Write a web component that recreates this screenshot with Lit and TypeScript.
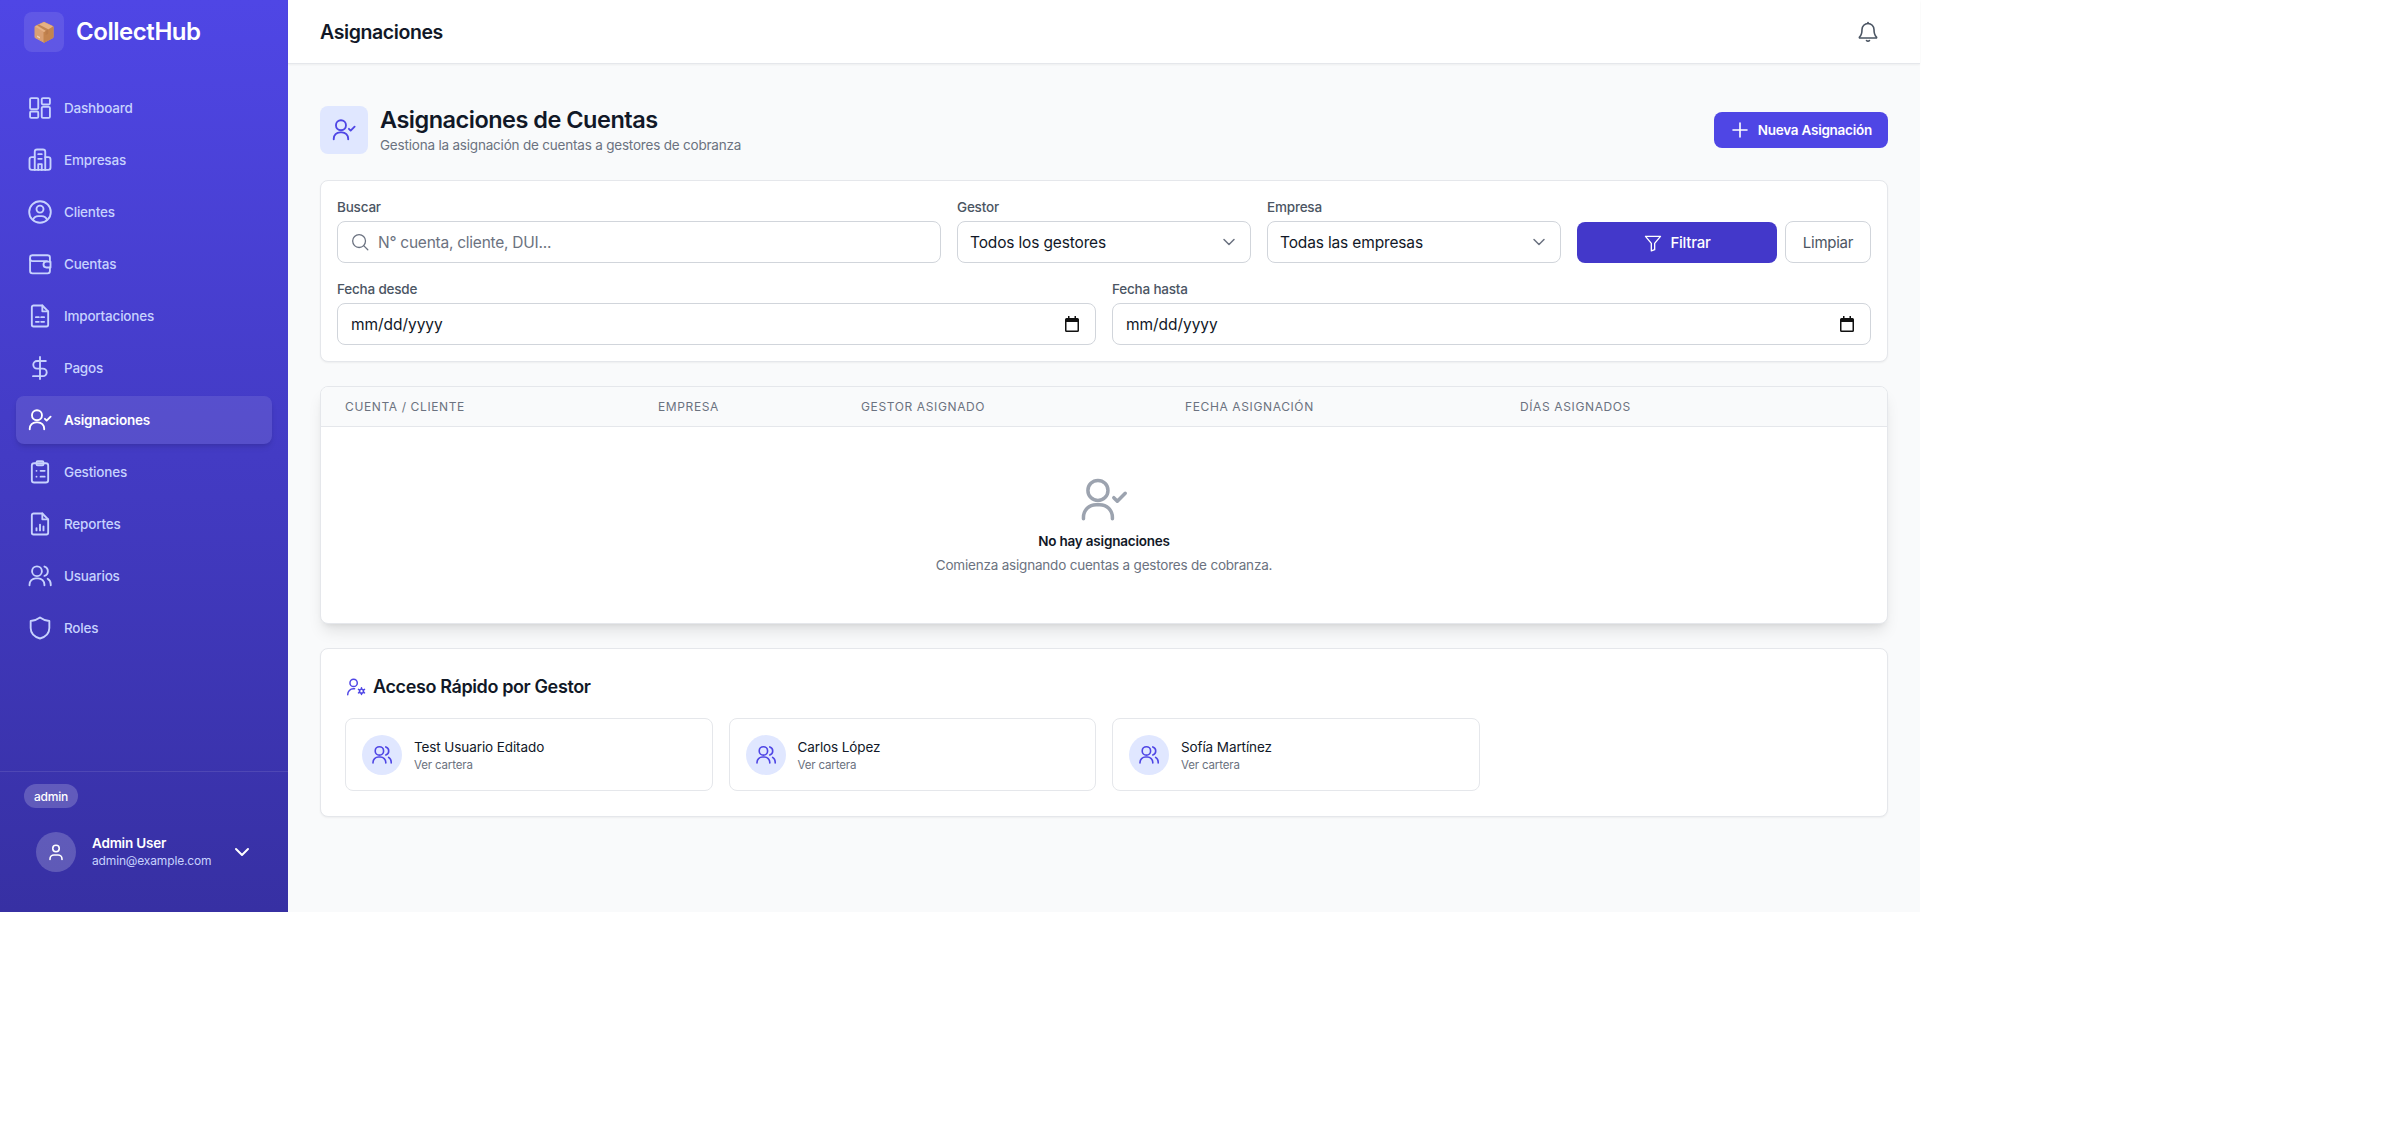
import { LitElement, html, css, svg } from "lit";
import { customElement } from "lit/decorators.js";

const ic = (paths: unknown, sw = 1.6) => html`<svg viewBox="0 0 24 24" fill="none" stroke="currentColor" stroke-width=${sw} stroke-linecap="round" stroke-linejoin="round">${paths}</svg>`;

const userCheck = svg`<circle cx="9.4" cy="7.9" r="4.3"/><path d="M3.2 20v-.6a5.400 5.400 0 0 1 5.400-5.400h1.600a5.400 5.400 0 0 1 5.400 5.400v.6"/><path d="m16.200 11 1.500 1.500 3.400-3.400"/>`;
const users = svg`<circle cx="9.400" cy="7.900" r="4.200"/><path d="M3 20v-.6a5.400 5.400 0 0 1 5.400-5.400h2a5.400 5.400 0 0 1 5.400 5.400v.6"/><path d="M15.800 3.900a4.200 4.200 0 0 1 0 8"/><path d="M18.600 14.400a5.400 5.400 0 0 1 2.600 4.600v1"/>`;

const navItems: [string, unknown][] = [
  ["Dashboard", svg`<rect x="3.500" y="3.500" width="7" height="9.500" rx="1"/><rect x="13.500" y="3.500" width="7" height="5.500" rx="1"/><rect x="13.500" y="11" width="7" height="9.500" rx="1"/><rect x="3.500" y="15" width="7" height="5.500" rx="1"/>`],
  ["Empresas", svg`<path d="M7.500 20.500V5a2 2 0 0 1 2-2h5a2 2 0 0 1 2 2v15.500"/><path d="M7.500 9.500H5a2 2 0 0 0-2 2v7a2 2 0 0 0 2 2h14a2 2 0 0 0 2-2v-7a2 2 0 0 0-2-2h-2.500"/><path d="M10.500 7h3M10.500 11h3M10.500 20.500V15.500h3v5"/>`],
  ["Clientes", svg`<circle cx="12" cy="12" r="9.250"/><circle cx="12" cy="9.500" r="3"/><path d="M6 18.500c.9-2 2.600-3 4.500-3h3c1.900 0 3.600 1 4.500 3"/>`],
  ["Cuentas", svg`<path d="M20.500 10V6.500a2 2 0 0 0-2-2H5.500a2 2 0 0 0-2 2V18a2 2 0 0 0 2 2h13a2 2 0 0 0 2-2v-3"/><path d="M3.500 7.500a2 2 0 0 0 2 2H18"/><path d="M21 10h-3.500a2.500 2.500 0 0 0 0 5H21z"/>`],
  ["Importaciones", svg`<path d="M14 3H6.500A1.500 1.500 0 0 0 5 4.500v15A1.500 1.500 0 0 0 6.500 21h11a1.500 1.500 0 0 0 1.500-1.500V8z"/><path d="M14 3v5h5"/><path d="M8.500 13h2.500M13 13h2.500M8.500 17h2.500M13 17h2.500"/>`],
  ["Pagos", svg`<path d="M12 2.500v19"/><path d="M17 6H9.500a3.250 3.250 0 0 0 0 6.500h5a3.250 3.250 0 0 1 0 6.500H6"/>`],
  ["Asignaciones", userCheck],
  ["Gestiones", svg`<rect x="5" y="4.500" width="14" height="16.500" rx="2"/><rect x="9" y="2.750" width="6" height="3.500" rx="1"/><path d="M9 11h.01M12.500 11H16M9 16h.01M12.500 16H16"/>`],
  ["Reportes", svg`<path d="M14 3H6.500A1.500 1.500 0 0 0 5 4.500v15A1.500 1.500 0 0 0 6.500 21h11a1.500 1.500 0 0 0 1.500-1.500V8z"/><path d="M14 3v5h5"/><path d="M9 17.500v-2M12 17.500v-5M15 17.500v-3.500"/>`],
  ["Usuarios", users],
  ["Roles", svg`<path d="M12 3c2.500 1.900 5 2.800 8 3v6c0 4.500-3.200 7.600-8 9-4.800-1.400-8-4.500-8-9V6c3-.2 5.500-1.100 8-3z"/>`],
];

const chevron = svg`<path d="m6 9 6 6 6-6"/>`;

@customElement("app-root")
export class AppRoot extends LitElement {
  static styles = css`
    :host { display: block; width: 1920px; height: 912px; font-family: Inter, "Liberation Sans", sans-serif; color: #111827; background: #fff; }
    * { box-sizing: border-box; }
    svg { display: block; flex: none; }
    .app { display: flex; height: 912px; }
    .side { width: 288px; flex: none; display: flex; flex-direction: column; background: linear-gradient(180deg, #4f46e5, #3730a3); color: #fff; }
    .brand { height: 64px; padding: 0 24px; display: flex; align-items: center; gap: 12px; }
    .logo { width: 40px; height: 40px; border-radius: 8px; background: rgba(255,255,255,.1); display: flex; align-items: center; justify-content: center; }
    .logo svg { width: 24px; height: 24px; }
    .brand b { font-size: 24px; font-weight: 600; letter-spacing: -.45px; margin-top: -1px; }
    nav { flex: 1; padding: 20px 16px 0; display: flex; flex-direction: column; gap: 4px; }
    .item { height: 48px; border-radius: 8px; padding: 0 10px; display: flex; align-items: center; gap: 10px; font-size: 13.500px; font-weight: 500; color: #c7d2fe; letter-spacing: -.2px; }
    .item svg { width: 28px; height: 28px; }
    .item span { margin-top: -1px; }
    .item.on { background: rgba(255,255,255,.1); color: #fff; font-weight: 600; box-shadow: 0 4px 6px -1px rgba(0,0,0,.1), 0 2px 4px -2px rgba(0,0,0,.1); }
    .foot { border-top: 1px solid rgba(255,255,255,.1); height: 141px; padding: 12px 24px 0; flex: none; }
    .badge { display: inline-flex; align-items: center; height: 24px; padding: 0 10px; border-radius: 12px; background: rgba(255,255,255,.2); font-size: 12px; font-weight: 500; letter-spacing: -.2px; }
    .user { margin-top: 24px; padding-left: 12px; display: flex; align-items: center; gap: 16px; }
    .ava { width: 40px; height: 40px; border-radius: 50%; background: rgba(255,255,255,.2); display: flex; align-items: center; justify-content: center; }
    .ava svg { width: 24px; height: 24px; }
    .who { width: 122px; margin-top: -2px; }
    .who b { display: block; font-size: 13.500px; font-weight: 600; line-height: 20px; letter-spacing: -.2px; }
    .who span { display: block; font-size: 12px; line-height: 16px; color: #c7d2fe; letter-spacing: -.15px; }
    .chev { width: 24px; height: 24px; }
    .main { flex: 1; min-width: 0; background: #f9fafb; display: flex; flex-direction: column; }
    .top { height: 64px; flex: none; background: #fff; border-bottom: 1px solid #e5e7eb; box-shadow: 0 1px 2px rgba(0,0,0,.05); padding: 0 40px 0 32px; display: flex; align-items: center; justify-content: space-between; }
    .top h1 { margin: 0; font-size: 19.500px; font-weight: 600; letter-spacing: -.4px; }
    .top svg { width: 24px; height: 24px; color: #4b5563; }
    .content { padding: 41px 32px 0; display: flex; flex-direction: column; }
    .head { display: flex; align-items: center; justify-content: space-between; height: 50px; }
    .hl { display: flex; align-items: center; gap: 12px; }
    .hicon { width: 48px; height: 48px; border-radius: 8px; background: #e0e7ff; color: #4f46e5; display: flex; align-items: center; justify-content: center; }
    .hicon svg { width: 28px; height: 28px; }
    h2 { margin: 0; font-size: 23.500px; line-height: 30px; font-weight: 600; letter-spacing: -.5px; }
    .hl p { margin: 0; font-size: 13.500px; line-height: 20px; color: #6b7280; letter-spacing: -.2px; }
    .new { height: 36px; padding: 0 16px 0 14px; border: 0; border-radius: 8px; background: #4f46e5; color: #fff; display: flex; align-items: center; gap: 6px; font: 600 13.500px Inter, sans-serif; letter-spacing: -.25px; }
    .new svg { width: 24px; height: 24px; }
    .card { background: #fff; border: 1px solid #e5e7eb; border-radius: 8px; box-shadow: 0 1px 2px rgba(0,0,0,.05); }
    .filters { margin-top: 25px; height: 182px; padding: 16px; display: flex; flex-direction: column; gap: 16px; }
    .r1 { display: grid; grid-template-columns: 604fr 294fr 294fr 294fr; gap: 16px; align-items: end; }
    .r2 { display: grid; grid-template-columns: 1fr 1fr; gap: 16px; }
    label { display: block; font-size: 13.500px; line-height: 20px; color: #4b5563; margin-bottom: 4px; letter-spacing: -.2px; font-weight: 500; }
    .box { height: 42px; border: 1px solid #d1d5db; border-radius: 8px; background: #fff; padding: 0 12px; display: flex; align-items: center; font-size: 15.500px; color: #111827; letter-spacing: -.15px; }
    .box.sel { justify-content: space-between; padding-right: 11px; }
    .box.sel svg { width: 20px; height: 20px; color: #6b7280; }
    .ph { color: #6b7280; margin-left: 7px; letter-spacing: -.25px; }
    .box.search svg { width: 22px; height: 22px; color: #6b7280; margin-left: -1px; }
    .cal { width: 16px; height: 16px; color: #111; }
    .box.date { justify-content: space-between; padding: 0 15px 0 13px; letter-spacing: -.05px; }
    .actions { display: flex; gap: 8px; align-items: flex-end; }
    .filt { flex: 1; height: 41px; border: 0; border-radius: 8px; background: #4338ca; color: #fff; display: flex; align-items: center; justify-content: center; gap: 7px; font: 500 15px Inter, sans-serif; letter-spacing: -.25px; }
    .filt svg { width: 20px; height: 20px; }
    .clr { width: 86px; height: 42px; border: 1px solid #d1d5db; border-radius: 8px; background: #fff; color: #4b5563; font: 400 15px Inter, sans-serif; letter-spacing: -.25px; }
    .table { margin-top: 24px; height: 238px; box-shadow: 0 10px 15px -3px rgba(0,0,0,.1), 0 4px 6px -4px rgba(0,0,0,.1); overflow: hidden; }
    .thead { height: 40px; background: #f9fafb; border-bottom: 1px solid #e5e7eb; display: grid; grid-template-columns: 313px 203px 324px 335px 1fr; align-items: center; font-size: 12px; font-weight: 400; letter-spacing: .62px; color: #6b7280; text-transform: uppercase; }
    .thead span { padding-left: 24px; }
    .empty { display: flex; flex-direction: column; align-items: center; padding-top: 45px; }
    .empty svg { width: 56px; height: 56px; color: #9ca3af; }
    .empty b { margin-top: 3px; font-size: 13.500px; line-height: 20px; font-weight: 600; letter-spacing: -.2px; }
    .empty p { margin: 4px 0 0; font-size: 13.500px; line-height: 20px; color: #6b7280; letter-spacing: -.2px; }
    .quick { margin-top: 24px; height: 169px; padding: 24px 24px 0; }
    .qh { display: flex; align-items: center; gap: 6px; height: 28px; }
    .qh svg { width: 22px; height: 22px; color: #4f46e5; }
    h3 { margin: 0; font-size: 18px; font-weight: 600; letter-spacing: -.38px; margin-top: -1px; }
    .grid { margin-top: 17px; display: grid; grid-template-columns: repeat(4, 1fr); gap: 16px; }
    .person { height: 73px; border: 1px solid #e5e7eb; border-radius: 8px; padding: 0 16px; display: flex; align-items: center; gap: 12px; }
    .pa { width: 40px; height: 40px; border-radius: 50%; background: #e0e7ff; color: #4f46e5; display: flex; align-items: center; justify-content: center; }
    .pa svg { width: 24px; height: 24px; }
    .person b { display: block; font-size: 13.500px; line-height: 20px; font-weight: 400; letter-spacing: -.1px; }
    .person span { display: block; font-size: 11.500px; line-height: 16px; color: #6b7280; letter-spacing: -.15px; }
  `;

  render() {
    return html`<div class="app">
      <aside class="side">
        <div class="brand">
          <div class="logo"><svg viewBox="0 0 24 24">
            <path d="M12 2.200 21 6.500v11l-9 4.800-9-4.800v-11z" fill="#d9a074" stroke="#d9a074" stroke-linejoin="round"/>
            <path d="M12 12l9-5.500v11l-9 4.800z" fill="#c4844f" stroke="#c4844f" stroke-linejoin="round"/>
            <path d="M12 2.200 21 6.500 12 12 3 6.500z" fill="#e6b184"/>
            <path d="m7 4.400 9.200 4.900v4.400l-2.600 1.300v-4.200L5.200 5.500z" fill="#b97a48" opacity=".8"/>
            <path d="m5 15.500 3 1.600v1.500l-3-1.600z" fill="#f3dcc4" opacity=".8"/>
          </svg></div>
          <b>CollectHub</b>
        </div>
        <nav>
          ${navItems.map(([label, icon]) => html`<div class="item ${label === "Asignaciones" ? "on" : ""}">${ic(icon)}<span>${label}</span></div>`)}
        </nav>
        <div class="foot">
          <span class="badge">admin</span>
          <div class="user">
            <div class="ava">${ic(svg`<circle cx="12" cy="8.500" r="3.250"/><path d="M6 19.500v-.5a4 4 0 0 1 4-4h4a4 4 0 0 1 4 4v.5"/>`)}</div>
            <div class="who"><b>Admin User</b><span>admin@example.com</span></div>
            <div class="chev">${ic(chevron, 2)}</div>
          </div>
        </div>
      </aside>
      <div class="main">
        <header class="top">
          <h1>Asignaciones</h1>
          ${ic(svg`<path d="M18 9.500a6 6 0 0 0-12 0c0 3.500-.7 6-2.500 7.500a.6.600 0 0 0 .4 1h16.200a.6.600 0 0 0 .4-1C18.700 15.500 18 13 18 9.500z"/><path d="M10.500 20.500a2 2 0 0 0 3 0"/><path d="M12 3.500V2.500"/>`)}
        </header>
        <div class="content">
          <div class="head">
            <div class="hl">
              <div class="hicon">${ic(userCheck)}</div>
              <div><h2>Asignaciones de Cuentas</h2><p>Gestiona la asignación de cuentas a gestores de cobranza</p></div>
            </div>
            <button class="new">${ic(svg`<path d="M12 5v14M5 12h14"/>`)}Nueva Asignación</button>
          </div>
          <section class="card filters">
            <div class="r1">
              <div><label>Buscar</label><div class="box search">${ic(svg`<circle cx="11" cy="11" r="7"/><path d="m20.500 20.500-4.500-4.500"/>`, 1.4)}<span class="ph">N° cuenta, cliente, DUI...</span></div></div>
              <div><label>Gestor</label><div class="box sel"><span>Todos los gestores</span>${ic(chevron, 1.8)}</div></div>
              <div><label>Empresa</label><div class="box sel"><span>Todas las empresas</span>${ic(chevron, 1.8)}</div></div>
              <div class="actions">
                <button class="filt">${ic(svg`<path d="M3 4h18l-7 8.500V20l-4 1.500v-9z"/>`)}Filtrar</button>
                <button class="clr">Limpiar</button>
              </div>
            </div>
            <div class="r2">
              ${["Fecha desde", "Fecha hasta"].map((l) => html`<div><label>${l}</label><div class="box date"><span>mm/dd/yyyy</span>
                <svg class="cal" viewBox="0 0 16 16" fill="currentColor"><path d="M4 0h1.500v2h5V0H12v2h1.500A1.500 1.500 0 0 1 15 3.500v11a1.500 1.500 0 0 1-1.500 1.500h-11A1.500 1.500 0 0 1 1 14.500v-11A1.500 1.500 0 0 1 2.500 2H4zM2.500 6v8.500h11V6z"/></svg></div></div>`)}
            </div>
          </section>
          <section class="card table">
            <div class="thead"><span>Cuenta / Cliente</span><span>Empresa</span><span>Gestor asignado</span><span>Fecha asignación</span><span>Días asignados</span></div>
            <div class="empty">
              ${ic(userCheck, 1.5)}
              <b>No hay asignaciones</b>
              <p>Comienza asignando cuentas a gestores de cobranza.</p>
            </div>
          </section>
          <section class="card quick">
            <div class="qh">${ic(svg`<circle cx="9.400" cy="7.500" r="4"/><path d="M3 20.500v-.5a6 6 0 0 1 6-6h1.500"/><circle cx="18" cy="16.500" r="2.200"/><path d="M18 12.700v1.600M18 18.700v1.600M14.700 14.600l1.400.8M19.900 17.600l1.400.8M21.300 14.600l-1.400.8M16.100 17.600l-1.400.8"/>`, 1.6)}<h3>Acceso Rápido por Gestor</h3></div>
            <div class="grid">
              ${["Test Usuario Editado", "Carlos López", "Sofía Martínez"].map((n) => html`<div class="person"><div class="pa">${ic(users)}</div><div><b>${n}</b><span>Ver cartera</span></div></div>`)}
            </div>
          </section>
        </div>
      </div>
    </div>`;
  }
}
